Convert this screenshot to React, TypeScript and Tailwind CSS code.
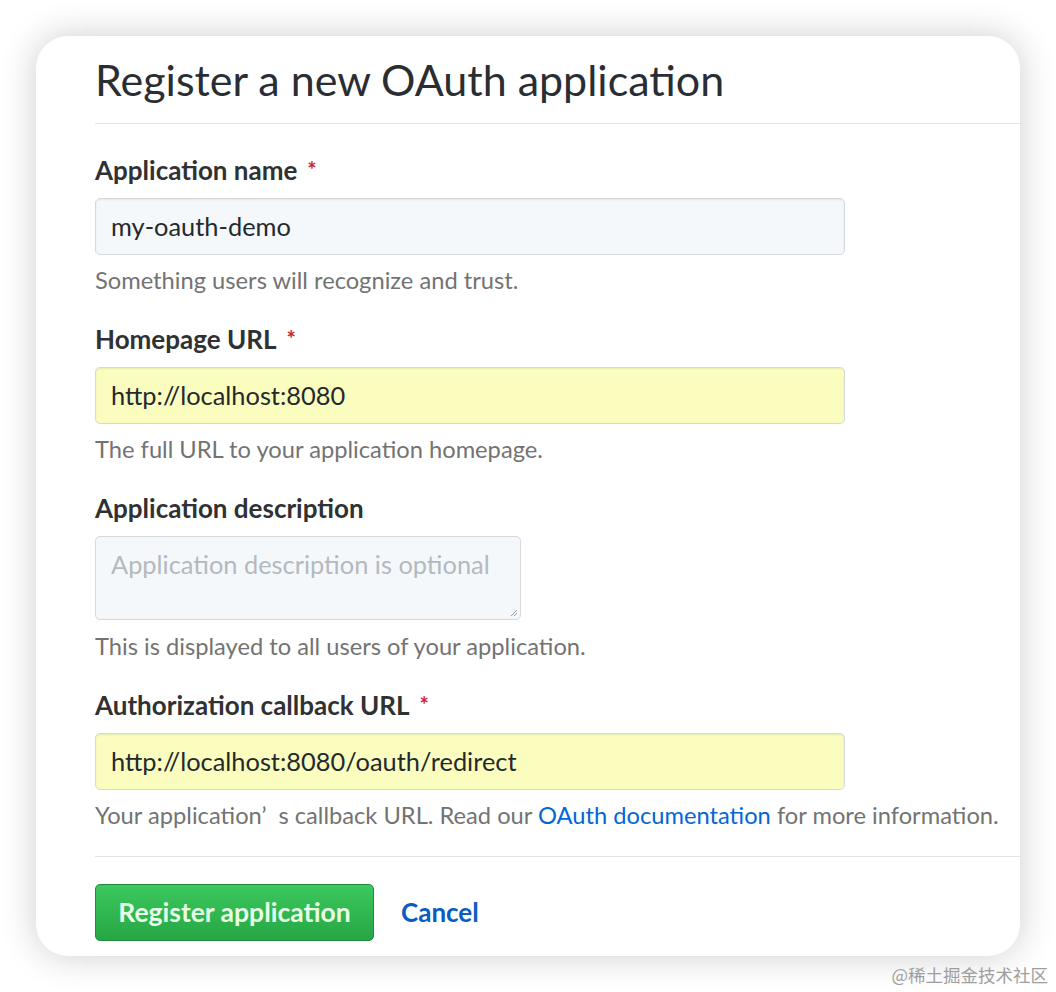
import React from "react";

const font = { fontFamily: '"Lato", "Noto Sans CJK SC", sans-serif' };

function Label({ text, required }: { text: string; required?: boolean }) {
  return (
    <div className="h-[30px] flex items-center text-[26px] font-bold text-[#2f3133] leading-[30px]">
      <span>{text}</span>
      {required && <span className="ml-[10px] text-[#cb2431] text-[22px]">*</span>}
    </div>
  );
}

function Help({ children }: { children: React.ReactNode }) {
  return (
    <div className="mt-[11px] h-[28px] leading-[28px] text-[23.7px] text-[#737373] whitespace-nowrap">{children}</div>
  );
}

function Field({ value, yellow }: { value: string; yellow?: boolean }) {
  return (
    <div
      className={`mt-[13px] w-[750px] h-[57px] rounded-[5px] border border-[#d5d8dc] flex items-center pl-[15px] text-[25.4px] text-[#24292e] shadow-[inset_0_1px_2px_rgba(27,31,35,0.075)] ${
        yellow ? "bg-[#fafdbe]" : "bg-[#f4f8fb]"
      }`}
    >
      {value}
    </div>
  );
}

export default function App() {
  return (
    <div className="w-[1056px] h-[992px] bg-white relative overflow-hidden" style={font}>
      <div className="absolute left-[36px] top-[36px] w-[984px] h-[920px] bg-white rounded-[32px] shadow-[0_0_36px_rgba(0,0,0,0.2)] overflow-hidden">
        <div className="pl-[59px]">
          <div className="pt-[20px] pb-[19px] border-b border-[#e1e4e8]">
            <h1 className="h-[48px] leading-[48px] text-[43px] font-normal text-[#2a2e33]">Register a new OAuth application</h1>
          </div>
          <div className="pt-[31px]">
            <Label text="Application name" required />
            <Field value="my-oauth-demo" />
            <Help>Something users will recognize and trust.</Help>

            <div className="mt-[30px]">
              <Label text="Homepage URL" required />
              <Field value="http://localhost:8080" yellow />
              <Help>The full URL to your application homepage.</Help>
            </div>

            <div className="mt-[30px]">
              <Label text="Application description" />
              <div className="mt-[13px] w-[426px] h-[84px] rounded-[5px] border border-[#d5d8dc] bg-[#f4f8fb] pl-[15px] pt-[11px] text-[25.4px] leading-[32px] text-[#b4b9bf] relative whitespace-nowrap">
                Application description is optional
                <svg className="absolute right-[2px] bottom-[2px]" width="8" height="8" viewBox="0 0 8 8">
                  <path d="M7 1L1 7M7 4L4 7" stroke="#9aa0a6" strokeWidth="1" />
                </svg>
              </div>
              <div className="mt-[12px] h-[28px] leading-[28px] text-[23.7px] text-[#737373]">This is displayed to all users of your application.</div>
            </div>

            <div className="mt-[30px]">
              <Label text="Authorization callback URL" required />
              <Field value="http://localhost:8080/oauth/redirect" yellow />
              <Help>
                Your application’&nbsp;&nbsp;s callback URL. Read our <span className="text-[#0366d6]">OAuth documentation</span> for more information.
              </Help>
            </div>
          </div>
          <div className="mt-[27px] border-t border-[#e1e4e8]" />
          <div className="mt-[27px] flex items-center">
            <div className="w-[279px] h-[57px] rounded-[5px] border border-[#1f8a3a] bg-gradient-to-b from-[#3bc95e] to-[#27a644] flex items-center justify-center text-[26.5px] font-bold text-[#e6ffe6]">
              Register application
            </div>
            <div className="ml-[27px] text-[26px] font-bold text-[#0a5cc2]">Cancel</div>
          </div>
        </div>
      </div>
      <div className="absolute right-[8px] top-[962px] text-[17.5px] leading-[26px] text-[#9e9e9e]" style={{ fontFamily: '"Noto Sans CJK SC", sans-serif' }}>
        @稀土掘金技术社区
      </div>
    </div>
  );
}
